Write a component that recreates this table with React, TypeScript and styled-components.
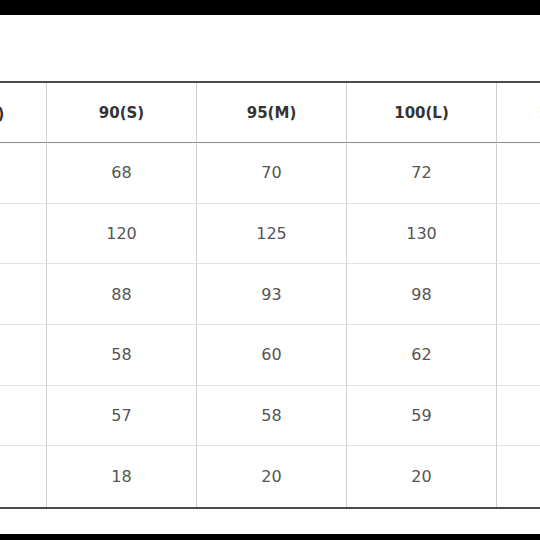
import React from "react";
import styled, { createGlobalStyle } from "styled-components";

const GlobalStyle = createGlobalStyle`
  html, body {
    margin: 0;
    padding: 0;
    background: #ffffff;
  }
  body {
    font-family: "DejaVu Sans", "Noto Sans CJK KR", sans-serif;
  }
`;

const Page = styled.div`
  width: 540px;
  height: 540px;
  display: flex;
  flex-direction: column;
  background: #ffffff;
  overflow: hidden;
`;

const Bar = styled.div<{ $h: number }>`
  flex: 0 0 ${(p) => p.$h}px;
  background: #000000;
`;

const Spacer = styled.div<{ $h?: number }>`
  flex: ${(p) => (p.$h !== undefined ? `0 0 ${p.$h}px` : "1 1 auto")};
`;

const Clip = styled.div`
  width: 540px;
  overflow: hidden;
  flex: 0 0 auto;
`;

const SizeTable = styled.div`
  display: grid;
  grid-template-columns: repeat(5, 150px);
  grid-template-rows: 60px repeat(6, 60.67px);
  width: 750px;
  margin-left: -103px;
  border-top: 2px solid #4a4a4a;
  border-bottom: 2px solid #4a4a4a;
  box-sizing: border-box;
`;

const Cell = styled.div<{ $head?: boolean; $lastRow?: boolean }>`
  display: flex;
  align-items: center;
  justify-content: center;
  box-sizing: border-box;
  border-right: 1px solid #cfcfcf;
  border-bottom: ${(p) =>
    p.$lastRow ? "none" : p.$head ? "1px solid #8a8a8a" : "1px solid #e2e2e2"};
  font-size: ${(p) => (p.$head ? "15px" : "16px")};
  font-weight: ${(p) => (p.$head ? 700 : 400)};
  color: ${(p) => (p.$head ? "#333333" : "#555555")};
  white-space: nowrap;
`;

const headers = ["구분(cm)", "90(S)", "95(M)", "100(L)", "105(XL)"];
const rows: string[][] = [
  ["총장", "68", "70", "72", "74"],
  ["가슴", "120", "125", "130", "135"],
  ["어깨", "88", "93", "98", "103"],
  ["소매", "58", "60", "62", "64"],
  ["밑단", "57", "58", "59", "60"],
  ["소매단", "18", "20", "20", "22"],
];

export default function App() {
  return (
    <>
      <GlobalStyle />
      <Page>
        <Bar $h={15} />
        <Spacer $h={66} />
        <Clip>
          <SizeTable>
            {headers.map((h) => (
              <Cell key={h} $head>
                {h}
              </Cell>
            ))}
            {rows.map((r, ri) =>
              r.map((v, ci) => (
                <Cell key={`${ri}-${ci}`} $lastRow={ri === rows.length - 1}>
                  {v}
                </Cell>
              ))
            )}
          </SizeTable>
        </Clip>
        <Spacer />
        <Bar $h={6} />
      </Page>
    </>
  );
}
